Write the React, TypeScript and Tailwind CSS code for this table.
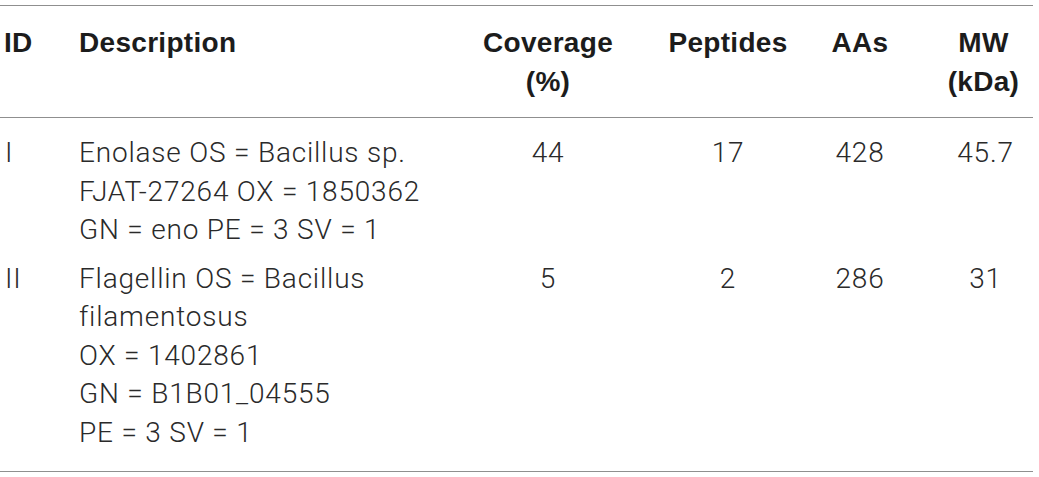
const rows = [
  {
    id: "I",
    desc: ["Enolase OS = Bacillus sp.", "FJAT-27264 OX = 1850362", "GN = eno PE = 3 SV = 1"],
    coverage: "44",
    peptides: "17",
    aas: "428",
    mw: "45.7",
  },
  {
    id: "II",
    desc: ["Flagellin OS = Bacillus", "filamentosus", "OX = 1402861", "GN = B1B01_04555", "PE = 3 SV = 1"],
    coverage: "5",
    peptides: "2",
    aas: "286",
    mw: "31",
  },
]

const cols = "grid grid-cols-[79px_391px_156px_196px_76px_1fr]"

export default function App() {
  return (
    <div className="min-h-screen bg-white font-['Liberation_Sans',Arial,sans-serif]">
      <div className="mt-[5px] w-[1033px] border-t border-b border-[#8f8f8f]">
        <div className={`${cols} border-b border-[#8f8f8f] pt-[18px] pb-[16px] text-[28px] font-bold leading-[38.5px] tracking-[0.3px] text-[#1c1c1c]`}>
          <div className="pl-1">ID</div>
          <div>Description</div>
          <div className="text-center">
            Coverage
            <br />
            (%)
          </div>
          <div className="pl-[8px] text-center">Peptides</div>
          <div className="text-center">AAs</div>
          <div className="pl-[36px] text-center">
            MW
            <br />
            (kDa)
          </div>
        </div>

        <div className="flex flex-col gap-[10px] pt-[16px] pb-[19px] font-['Roboto','Liberation_Sans',sans-serif] text-[28px] font-light leading-[38.5px] tracking-[0.8px] text-[#2a2a2a]">
          {rows.map((row) => (
            <div key={row.id} className={cols}>
              <div className="pl-[5px]">{row.id}</div>
              <div>
                {row.desc.map((line) => (
                  <div key={line}>{line}</div>
                ))}
              </div>
              <div className="text-center">{row.coverage}</div>
              <div className="pl-[8px] text-center">{row.peptides}</div>
              <div className="text-center">{row.aas}</div>
              <div className="pl-[40px] text-center">{row.mw}</div>
            </div>
          ))}
        </div>
      </div>
    </div>
  )
}
